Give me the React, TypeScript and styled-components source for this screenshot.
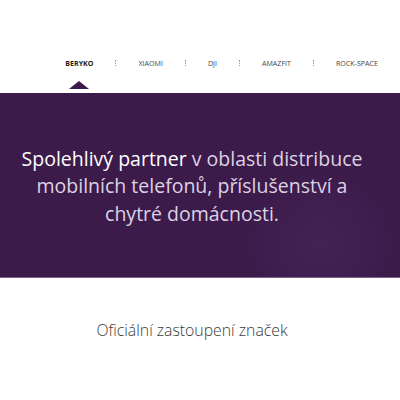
import React from "react";
import styled, { createGlobalStyle } from "styled-components";

const Global = createGlobalStyle`
  html, body { margin: 0; padding: 0; background: #ffffff; }
  body { font-family: "Open Sans", "Noto Sans", sans-serif; }
`;

const Header = styled.header`
  height: 93px;
  display: flex;
  align-items: flex-start;
  justify-content: flex-end;
  padding-top: 58px;
  box-sizing: border-box;
`;

const Nav = styled.nav`
  display: flex;
  align-items: center;
`;

const NavItem = styled.a<{ $active?: boolean }>`
  position: relative;
  padding: 0 22px;
  font-size: 7.1px;
  line-height: 10px;
  text-transform: uppercase;
  font-weight: ${(p) => (p.$active ? 700 : 400)};
  color: ${(p) => (p.$active ? "#222222" : "#474747")};
  text-decoration: none;
  white-space: nowrap;
`;

const Pointer = styled.span`
  position: absolute;
  left: 50%;
  top: 23px;
  margin-left: -10px;
  width: 0;
  height: 0;
  border-left: 10px solid transparent;
  border-right: 10px solid transparent;
  border-bottom: 8px solid #3c1b4b;
`;

const Sep = styled.span`
  width: 0;
  height: 6px;
  border-left: 1px dotted #9a9a9a;
`;

const Hero = styled.section`
  height: 185px;
  box-sizing: border-box;
  background:
    radial-gradient(circle at 320px 150px, rgba(80, 42, 96, 0.45) 0, rgba(80, 42, 96, 0) 75px),
    #3c1b4b;
  border-bottom: 1px solid #7c6284;
  display: flex;
  align-items: center;
  justify-content: center;
  padding: 2px 16px 0 0;
`;

const Lead = styled.p`
  margin: 0;
  text-align: center;
  font-size: 19.5px;
  line-height: 27.5px;
  font-weight: 400;
  color: #ddd2e3;
`;

const Strong = styled.span`
  color: #ffffff;
`;

const Brands = styled.section`
  display: flex;
  justify-content: center;
  padding: 40px 16px 0 0;
`;

const Title = styled.h2`
  margin: 0;
  font-size: 15.8px;
  line-height: 24px;
  font-weight: 300;
  color: #3a3a3a;
`;

const items = ["Beryko", "Xiaomi", "DJI", "Amazfit", "Rock-Space"];

export default function App() {
  return (
    <>
      <Global />
      <Header>
        <Nav>
          {items.map((it, i) => (
            <React.Fragment key={it}>
              {i > 0 && <Sep />}
              <NavItem $active={i === 0}>
                {it}
                {i === 0 && <Pointer />}
              </NavItem>
            </React.Fragment>
          ))}
        </Nav>
      </Header>
      <Hero>
        <Lead>
          <Strong>Spolehlivý partner</Strong> v oblasti distribuce
          <br />
          mobilních telefonů, příslušenství a
          <br />
          chytré domácnosti.
        </Lead>
      </Hero>
      <Brands>
        <Title>Oficiální zastoupení značek</Title>
      </Brands>
    </>
  );
}
